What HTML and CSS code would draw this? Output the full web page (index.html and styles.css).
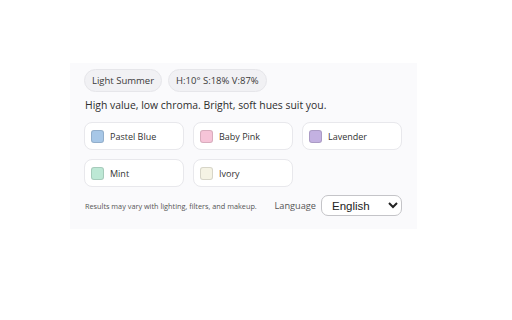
FILE: index.html
```html
<!DOCTYPE html>
<html lang="en">
<head>
    <meta charset="UTF-8">
    <meta name="viewport" content="width=device-width, initial-scale=1.0">
    <title>Season Result</title>
    <link rel="stylesheet" href="styles.css">
</head>
<body>
    <div class="panel">
        <div class="chips">
            <span class="chip">Light Summer</span>
            <span class="chip">H:10° S:18% V:87%</span>
        </div>
        <p class="summary">High value, low chroma. Bright, soft hues suit you.</p>

        <div class="palette">
            <div class="color"><span class="swatch blue"></span>Pastel Blue</div>
            <div class="color"><span class="swatch pink"></span>Baby Pink</div>
            <div class="color"><span class="swatch lavender"></span>Lavender</div>
            <div class="color"><span class="swatch mint"></span>Mint</div>
            <div class="color"><span class="swatch ivory"></span>Ivory</div>
        </div>

        <div class="footer">
            <span class="note">Results may vary with lighting, filters, and makeup.</span>
            <label class="lang" for="lang">Language</label>
            <select id="lang">
                <option>English</option>
                <option>Italiano</option>
            </select>
        </div>
    </div>
</body>
</html>
```

FILE: styles.css
```css
body {
    font-family: 'Open Sans', 'Noto Sans', sans-serif;
    background-color: #ffffff;
    color: #333;
    margin: 0;
    padding: 63px 0 0 70px;
}

.panel {
    width: 347px;
    height: 166px;
    box-sizing: border-box;
    background: #fafafc;
    padding: 6px 15px 0 14px;
}

.chips {
    display: flex;
    gap: 6px;
}

.chip {
    font-size: 9.5px;
    line-height: 21px;
    padding: 0 7px;
    border: 1px solid #e6e6ea;
    border-radius: 12px;
    background: #f1f1f4;
    color: #3a3a3a;
}

.summary {
    margin: 5px 0 9px 1px;
    font-size: 10.4px;
    line-height: 16px;
    color: #2e2e2e;
}

.palette {
    display: grid;
    grid-template-columns: repeat(3, 100px);
    column-gap: 9px;
    row-gap: 9px;
}

.color {
    display: flex;
    align-items: center;
    height: 28px;
    box-sizing: border-box;
    border: 1px solid #e8e8ec;
    border-radius: 8px;
    background: #ffffff;
    padding-left: 6px;
    font-size: 9px;
    color: #333;
}

.swatch {
    width: 13px;
    height: 13px;
    border-radius: 3px;
    margin-right: 6px;
    box-sizing: border-box;
    border: 1px solid rgba(0, 0, 0, 0.12);
}

.blue { background: #a7c7e7; }
.pink { background: #f6c4d8; }
.lavender { background: #c3b1e1; }
.mint { background: #bde8d5; }
.ivory { background: #f5f3e4; }

.footer {
    display: flex;
    align-items: center;
    margin-top: 8px;
    padding-left: 1px;
}

.note {
    font-size: 7.3px;
    color: #555;
    margin-right: auto;
}

.lang {
    font-size: 9.2px;
    color: #555;
    margin-right: 5px;
}

select {
    width: 81px;
    height: 21px;
    font-family: 'Liberation Sans', Arial, sans-serif;
    font-size: 11.5px;
    border: 1px solid #c4c4c8;
    border-radius: 7px;
    background: #fff;
    color: #222;
    padding: 0 6px;
}
```
